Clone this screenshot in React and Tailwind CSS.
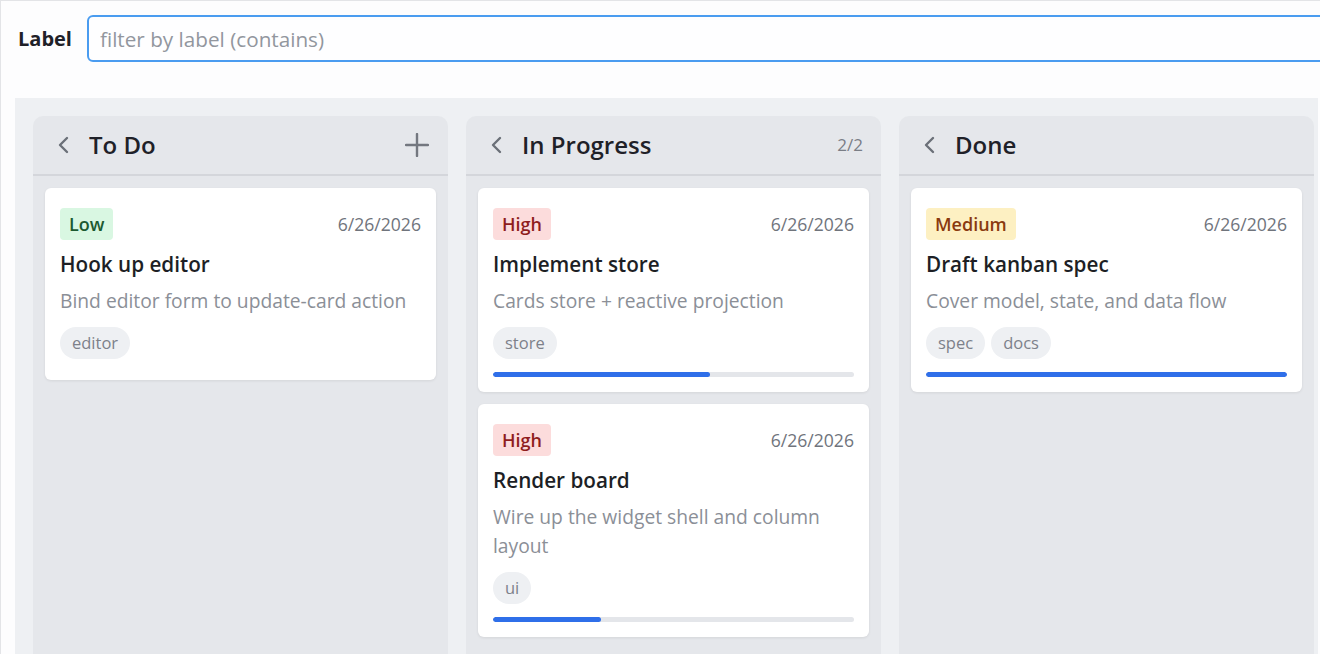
import { useState } from "react";

const PRIORITY_STYLES = {
  Low: "bg-[#d9f7e2] text-[#1c5a30]",
  High: "bg-[#fcdcdc] text-[#8f1d1d]",
  Medium: "bg-[#fdf0c2] text-[#8a3a0f]",
};

const COLUMNS = [
  {
    id: "todo",
    title: "To Do",
    action: "plus",
    cards: [
      {
        id: 1,
        priority: "Low",
        date: "6/26/2026",
        title: "Hook up editor",
        description: "Bind editor form to update-card action",
        tags: ["editor"],
        progress: null,
      },
    ],
  },
  {
    id: "progress",
    title: "In Progress",
    action: "2/2",
    cards: [
      {
        id: 2,
        priority: "High",
        date: "6/26/2026",
        title: "Implement store",
        description: "Cards store + reactive projection",
        tags: ["store"],
        progress: 60,
      },
      {
        id: 3,
        priority: "High",
        date: "6/26/2026",
        title: "Render board",
        description: "Wire up the widget shell and column layout",
        tags: ["ui"],
        progress: 30,
      },
    ],
  },
  {
    id: "done",
    title: "Done",
    action: null,
    cards: [
      {
        id: 4,
        priority: "Medium",
        date: "6/26/2026",
        title: "Draft kanban spec",
        description: "Cover model, state, and data flow",
        tags: ["spec", "docs"],
        progress: 100,
      },
    ],
  },
];

function ChevronLeft() {
  return (
    <svg width="14" height="18" viewBox="0 0 14 18" fill="none" className="shrink-0">
      <path d="M10 2L3 9l7 7" stroke="#6b7078" strokeWidth="2.4" strokeLinecap="round" strokeLinejoin="round" />
    </svg>
  );
}

function PlusIcon() {
  return (
    <svg width="24" height="24" viewBox="0 0 24 24" fill="none">
      <path d="M12 1v22M1 12h22" stroke="#73777f" strokeWidth="2.4" strokeLinecap="round" />
    </svg>
  );
}

function Card({ card }) {
  return (
    <div className="flex flex-col bg-white rounded-[6px] shadow-[0_1px_3px_rgba(0,0,0,0.08)] px-[15px] pt-[20px] pb-[15px]">
      <div className="flex items-center justify-between">
        <span className={`h-[32px] px-[9px] flex items-center rounded-[4px] text-[18px] font-semibold ${PRIORITY_STYLES[card.priority]}`}>
          {card.priority}
        </span>
        <span className="text-[17.6px] text-[#70747c]">{card.date}</span>
      </div>
      <h3 className="mt-[10px] text-[20.7px] leading-[28px] font-semibold text-[#1d1f25]">{card.title}</h3>
      <p className="mt-[8px] text-[19.25px] leading-[29px] text-[#8b8f97]">{card.description}</p>
      <div className="mt-[12px] mb-[6px] flex gap-[6px]">
        {card.tags.map((tag) => (
          <span key={tag} className="h-[32px] px-[12px] flex items-center rounded-full bg-[#eef0f3] text-[16.5px] text-[#7d818a]">
            {tag}
          </span>
        ))}
      </div>
      {card.progress !== null && (
        <div className="mt-[7px] h-[5px] rounded-full bg-[#e4e6ea] overflow-hidden">
          <div className="h-full rounded-full bg-[#2f6fe9]" style={{ width: `${card.progress}%` }} />
        </div>
      )}
    </div>
  );
}

function Column({ column }) {
  return (
    <div className="w-[415px] shrink-0 bg-[#e5e7eb] rounded-t-[10px] min-h-[600px]">
      <div className="h-[60px] flex items-center justify-between pl-[24px] pr-[18px] border-b-2 border-[#d4d6db]">
        <div className="flex items-center gap-[18px]">
          <ChevronLeft />
          <h2 className="text-[24px] font-semibold text-[#1f2128]">{column.title}</h2>
        </div>
        {column.action === "plus" ? (
          <button className="flex items-center justify-center w-[26px] h-[26px]">
            <PlusIcon />
          </button>
        ) : column.action ? (
          <span className="text-[17px] text-[#7a7e86]">{column.action}</span>
        ) : null}
      </div>
      <div className="flex flex-col gap-[12px] p-[12px]">
        {column.cards.map((card) => (
          <Card key={card.id} card={card} />
        ))}
      </div>
    </div>
  );
}

export default function App() {
  const [filter, setFilter] = useState("");

  return (
    <div className="w-[1320px] h-[654px] overflow-hidden bg-[#fdfdfe] border-t border-l border-[#e3e4e7] font-['Open_Sans',sans-serif]">
      <div className="flex items-center pt-[14px] pl-[17px] gap-[15px]">
        <label className="text-[20px] font-bold text-[#1f2128]">Label</label>
        <input
          type="text"
          value={filter}
          onChange={(e) => setFilter(e.target.value)}
          placeholder="filter by label (contains)"
          className="w-[1260px] shrink-0 h-[47px] px-[11px] text-[20.7px] rounded-[6px] border-2 border-[#4a9cf0] bg-[#fefeff] outline-none placeholder:text-[#92969e]"
        />
      </div>
      <div className="mt-[36px] ml-[14px] mr-[2px] bg-[#eef0f3] pt-[18px] pl-[18px] overflow-hidden h-[600px]">
        <div className="flex gap-[18px]">
          {COLUMNS.map((column) => (
            <Column key={column.id} column={column} />
          ))}
        </div>
      </div>
    </div>
  );
}
